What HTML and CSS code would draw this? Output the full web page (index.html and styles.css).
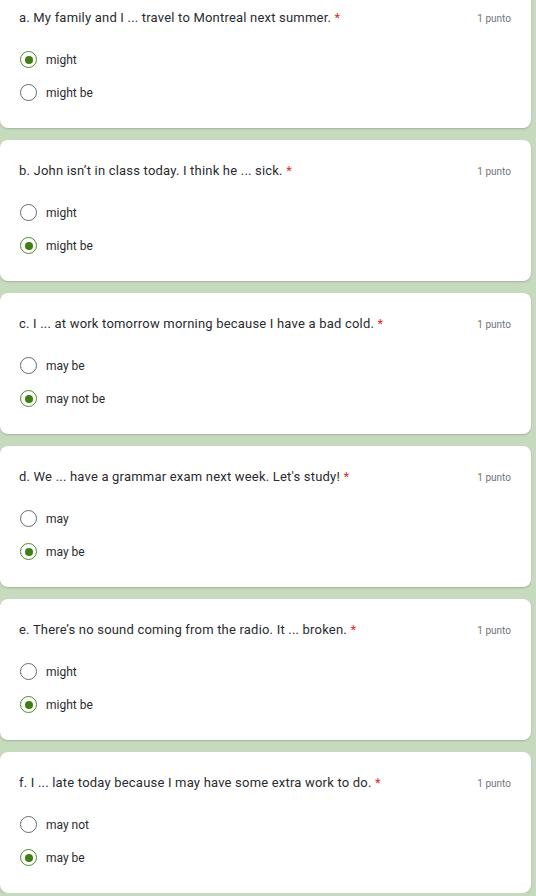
FILE: index.html
```html
<!DOCTYPE html>
<html>
<head>
<meta charset="utf-8">
<link rel="stylesheet" href="styles.css">
</head>
<body>
<div class="list">
  <div class="card">
    <div class="head"><div class="q">a. My family and I ... travel to Montreal next summer. <span class="req">*</span></div><div class="pts">1 punto</div></div>
    <div class="opt"><span class="radio on"></span><span class="lbl">might</span></div>
    <div class="opt"><span class="radio"></span><span class="lbl">might be</span></div>
  </div>
  <div class="card">
    <div class="head"><div class="q">b. John isn’t in class today. I think he ... sick. <span class="req">*</span></div><div class="pts">1 punto</div></div>
    <div class="opt"><span class="radio"></span><span class="lbl">might</span></div>
    <div class="opt"><span class="radio on"></span><span class="lbl">might be</span></div>
  </div>
  <div class="card">
    <div class="head"><div class="q">c. I ... at work tomorrow morning because I have a bad cold. <span class="req">*</span></div><div class="pts">1 punto</div></div>
    <div class="opt"><span class="radio"></span><span class="lbl">may be</span></div>
    <div class="opt"><span class="radio on"></span><span class="lbl">may not be</span></div>
  </div>
  <div class="card">
    <div class="head"><div class="q">d. We ... have a grammar exam next week. Let's study! <span class="req">*</span></div><div class="pts">1 punto</div></div>
    <div class="opt"><span class="radio"></span><span class="lbl">may</span></div>
    <div class="opt"><span class="radio on"></span><span class="lbl">may be</span></div>
  </div>
  <div class="card">
    <div class="head"><div class="q">e. There’s no sound coming from the radio. It ... broken. <span class="req">*</span></div><div class="pts">1 punto</div></div>
    <div class="opt"><span class="radio"></span><span class="lbl">might</span></div>
    <div class="opt"><span class="radio on"></span><span class="lbl">might be</span></div>
  </div>
  <div class="card">
    <div class="head"><div class="q">f. I ... late today because I may have some extra work to do. <span class="req">*</span></div><div class="pts">1 punto</div></div>
    <div class="opt"><span class="radio"></span><span class="lbl">may not</span></div>
    <div class="opt"><span class="radio on"></span><span class="lbl">may be</span></div>
  </div>
</div>
</body>
</html>
```
FILE: styles.css
```css
html, body {
  margin: 0;
  padding: 0;
  background: #c6dabd;
  font-family: Roboto, "Liberation Sans", sans-serif;
  color: #202124;
  overflow: hidden;
}
.list {
  display: flex;
  flex-direction: column;
  gap: 12px;
  margin-top: -13px;
  width: 531px;
}
.card {
  background: #fff;
  border-radius: 8px;
  box-shadow: 0 1px 2px rgba(0,0,0,0.18);
  height: 141px;
  box-sizing: border-box;
  padding: 21px 20px 19px 19px;
}
.head {
  display: flex;
  justify-content: space-between;
  align-items: center;
  height: 20px;
  margin-bottom: 15px;
}
.q {
  font-size: 13px;
  line-height: 20px;
  letter-spacing: 0.2px;
  color: #2a2b2e;
}
.req { color: #d93025; }
.pts {
  font-size: 10px;
  color: #70757a;
}
.opt {
  display: flex;
  align-items: center;
  height: 33px;
}
.radio {
  box-sizing: border-box;
  width: 17px;
  height: 17px;
  border: 1.5px solid #666a6e;
  border-radius: 50%;
  margin-left: 1px;
  display: flex;
  align-items: center;
  justify-content: center;
}
.radio.on { border-color: #4d8b26; }
.radio.on::after {
  content: "";
  width: 8px;
  height: 8px;
  border-radius: 50%;
  background: #3f7e12;
}
.lbl {
  font-size: 12px;
  margin-left: 9px;
  color: #2a2b2e;
}
```
